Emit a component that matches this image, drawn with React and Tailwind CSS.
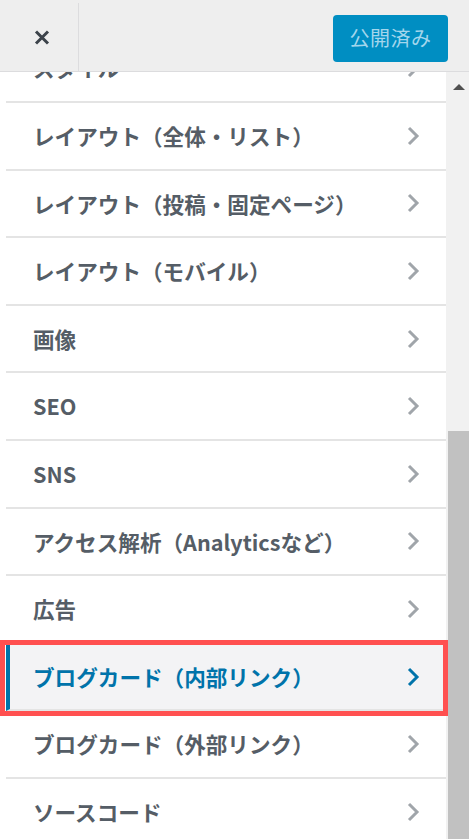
import React from "react";

const items = [
  "スタイル",
  "レイアウト（全体・リスト）",
  "レイアウト（投稿・固定ページ）",
  "レイアウト（モバイル）",
  "画像",
  "SEO",
  "SNS",
  "アクセス解析（Analyticsなど）",
  "広告",
  "ブログカード（内部リンク）",
  "ブログカード（外部リンク）",
  "ソースコード",
];

function Chevron({ color }) {
  return (
    <svg width="14" height="22" viewBox="0 0 14 22" fill="none">
      <path d="M3 3 L11 11 L3 19" stroke={color} strokeWidth="3" strokeLinecap="butt" strokeLinejoin="miter" />
    </svg>
  );
}

function Row({ label, active }) {
  return (
    <div
      className={
        "relative flex items-center justify-between h-[67.6px] ml-[6px] border-b-2 border-[#e4e4e4] " +
        (active ? "bg-[#f3f3f5] border-l-4 border-l-[#0073aa] pl-[23px]" : "bg-white pl-[27px]")
      }
    >
      <span
        className={
          "text-[21.6px] font-semibold leading-none whitespace-nowrap " +
          (active ? "text-[#0073aa]" : "text-[#555d66]")
        }
      >
        {label}
      </span>
      <span className="mr-[26px] flex items-center">
        <Chevron color={active ? "#0073aa" : "#a0a5aa"} />
      </span>
      {active && (
        <div className="pointer-events-none absolute z-10 left-[-10px] right-[-2px] top-[-4px] bottom-[-7px] border-[5px] border-[#ff5050]" />
      )}
    </div>
  );
}

export default function App() {
  return (
    <div
      className="w-[469px] h-[839px] overflow-hidden flex flex-col bg-white"
      style={{ fontFamily: "'Noto Sans CJK JP', 'Noto Sans', sans-serif" }}
    >
      <div className="relative z-20 h-[72px] shrink-0 flex items-stretch bg-[#eeeeee] border-b border-[#dcdcde]">
        <div className="w-[79px] flex items-center justify-center border-r border-[#dcdcde] mt-[3px]">
          <svg width="16" height="15" viewBox="0 0 16 15" className="mt-[1px] ml-[6px]">
            <path d="M2 1.5 L14 13.5 M14 1.5 L2 13.5" stroke="#3c434a" strokeWidth="3" />
          </svg>
        </div>
        <div className="flex-1 flex items-center justify-end pr-[21px] pt-[5px]">
          <div className="w-[115px] h-[47px] rounded-[4px] bg-[#008ec2] flex items-center justify-center">
            <span className="text-[20px] text-[#a3d6ec] leading-none tracking-[0.5px]">公開済み</span>
          </div>
        </div>
      </div>
      <div className="flex-1 flex min-h-0">
        <div className="w-[446px] shrink-0">
          <div className="mt-[-36.6px]">
            {items.map((it, i) => (
              <Row key={i} label={it} active={i === 9} />
            ))}
          </div>
        </div>
        <div className="w-[23px] bg-[#f1f1f1] flex flex-col">
          <div className="h-[20px] flex items-end justify-center pb-[2px] pl-[3px]">
            <svg width="12" height="6" viewBox="0 0 12 6">
              <path d="M0 6 L6 0 L12 6 Z" fill="#505050" />
            </svg>
          </div>
          <div className="h-[339px]" />
          <div className="flex-1 ml-[2px] bg-[#c1c1c1]" />
        </div>
      </div>
    </div>
  );
}
